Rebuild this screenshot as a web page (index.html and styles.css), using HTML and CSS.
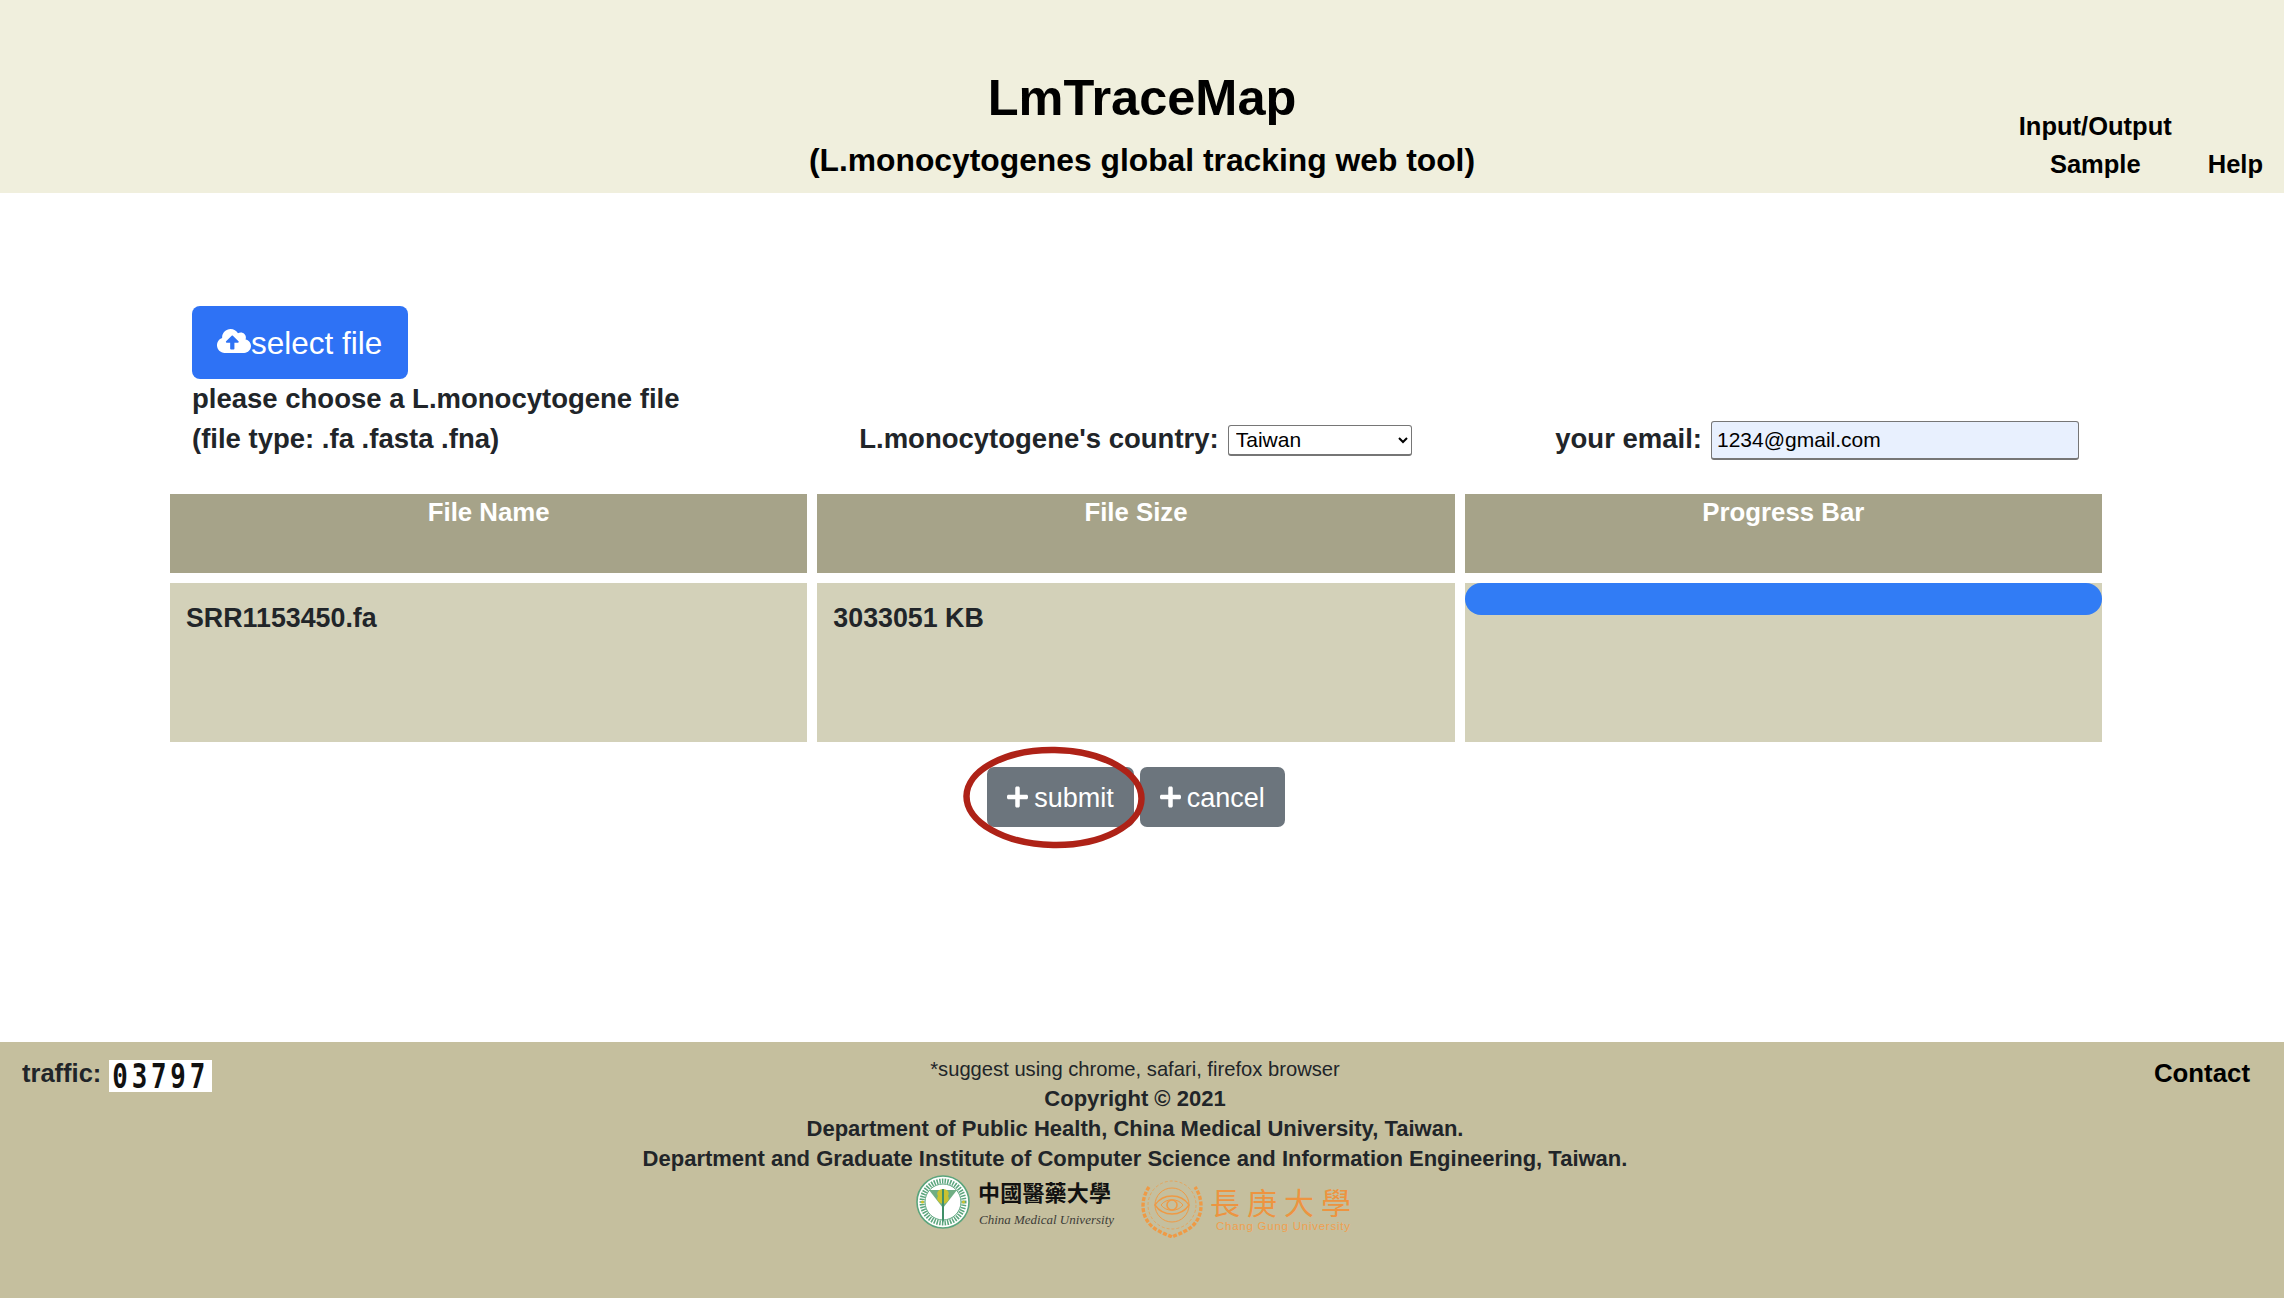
FILE: index.html
```html
<!DOCTYPE html>
<html lang="en">
<head>
<meta charset="utf-8">
<title>LmTraceMap</title>
<link rel="stylesheet" href="styles.css">
</head>
<body>
<div class="page">
  <header class="site-header">
    <div class="titles">
      <h1>LmTraceMap</h1>
      <h2>(L.monocytogenes global tracking web tool)</h2>
    </div>
    <nav class="site-nav">
      <a class="nav-link">Input/Output<br>Sample</a>
      <a class="nav-link">Help</a>
    </nav>
  </header>

  <main class="content">
    <form class="form-row">
      <div class="form-col file-col">
        <button type="button" class="btn btn-blue">
          <svg class="ico-cloud" viewBox="0 0 640 512"><path fill="currentColor" d="M537.6 226.6c4.1-10.7 6.4-22.4 6.4-34.6 0-53-43-96-96-96-19.7 0-38.1 6-53.3 16.2C367 64.2 315.3 32 256 32c-88.4 0-160 71.6-160 160 0 2.7.1 5.4.2 8.1C40.2 219.8 0 273.2 0 336c0 79.5 64.5 144 144 144h368c70.7 0 128-57.3 128-128 0-61.9-44-113.6-102.4-125.4zM393.4 288H328v112c0 8.8-7.2 16-16 16h-48c-8.8 0-16-7.2-16-16V288h-65.4c-14.3 0-21.4-17.2-11.3-27.3l105.4-105.4c6.2-6.2 16.4-6.2 22.6 0l105.4 105.4c10.1 10.1 2.9 27.3-11.3 27.3z"/></svg><span class="btn-label">select file</span>
        </button>
        <p class="hint">please choose a L.monocytogene file<br>(file type: .fa .fasta .fna)</p>
      </div>
      <div class="form-col country-col">
        <label class="field-label" for="country">L.monocytogene's country:</label>
        <select id="country" class="country-select"><option>Taiwan</option></select>
      </div>
      <div class="form-col email-col">
        <label class="field-label" for="email">your email:</label>
        <input id="email" class="email-input" type="text" value="1234@gmail.com">
      </div>
    </form>

    <div class="file-table">
      <div class="cell head">File Name</div>
      <div class="cell head">File Size</div>
      <div class="cell head">Progress Bar</div>
      <div class="cell body-cell">SRR1153450.fa</div>
      <div class="cell body-cell">3033051 KB</div>
      <div class="cell progress-cell"><div class="progress-bar"></div></div>
    </div>

    <div class="actions">
      <span class="submit-wrap">
        <button type="button" class="btn btn-gray">
          <svg class="ico-plus" viewBox="0 0 448 512"><path fill="currentColor" d="M416 208H272V64c0-17.67-14.33-32-32-32h-32c-17.67 0-32 14.33-32 32v144H32c-17.67 0-32 14.33-32 32v32c0 17.67 14.33 32 32 32h144v144c0 17.67 14.33 32 32 32h32c17.67 0 32-14.33 32-32V304h144c17.67 0 32-14.33 32-32v-32c0-17.67-14.33-32-32-32z"/></svg><span class="btn-label">submit</span>
        </button>
        <svg class="ring" viewBox="0 0 184 103"><ellipse cx="92" cy="51.5" rx="87.5" ry="47.5" fill="none" stroke="#ae2217" stroke-width="6.5" transform="rotate(1 92 51.5)"/></svg>
      </span>
      <button type="button" class="btn btn-gray">
        <svg class="ico-plus" viewBox="0 0 448 512"><path fill="currentColor" d="M416 208H272V64c0-17.67-14.33-32-32-32h-32c-17.67 0-32 14.33-32 32v144H32c-17.67 0-32 14.33-32 32v32c0 17.67 14.33 32 32 32h144v144c0 17.67 14.33 32 32 32h32c17.67 0 32-14.33 32-32V304h144c17.67 0 32-14.33 32-32v-32c0-17.67-14.33-32-32-32z"/></svg><span class="btn-label">cancel</span>
      </button>
    </div>
  </main>

  <footer class="site-footer">
    <div class="traffic">traffic:<span class="counter"><span class="counter-digits">03797</span></span></div>
    <div class="credits">
      <p class="suggest">*suggest using chrome, safari, firefox browser</p>
      <p>Copyright © 2021</p>
      <p>Department of Public Health, China Medical University, Taiwan.</p>
      <p>Department and Graduate Institute of Computer Science and Information Engineering, Taiwan.</p>
      <div class="logos">
        <div class="logo logo-cmu">
          <svg class="crest-cmu" viewBox="0 0 54 54">
            <circle cx="27" cy="27" r="26" fill="#fff" stroke="#5aa57c" stroke-width="1.6"/>
            <circle cx="27" cy="27" r="21" fill="none" stroke="#5aa57c" stroke-width="5" stroke-dasharray="1.5 1.2"/>
            <circle cx="27" cy="27" r="18" fill="#fff" stroke="#5aa57c" stroke-width="1"/>
            <path d="M13 15 H41 L27 33 Z" fill="#6fae83"/>
            <path d="M27 14 C22 14 20 18 22 21 C20 24 22 28 27 29 C32 28 34 24 32 21 C34 18 32 14 27 14 Z" fill="#c9c232"/>
            <path d="M26 14 H28 V45 L27 48 L26 45 Z" fill="#3f8f68"/>
            <circle cx="6.5" cy="27" r="1.6" fill="#c9c232"/>
            <circle cx="47.5" cy="27" r="1.6" fill="#c9c232"/>
          </svg>
          <div class="logo-text">
            <span class="cmu-zh">中國醫藥大學</span>
            <span class="cmu-en">China Medical University</span>
          </div>
        </div>
        <div class="logo logo-cgu">
          <svg class="crest-cgu" viewBox="0 0 64 60">
            <g fill="none" stroke="#ef9a45">
              <path d="M9 9 C0 22 0 42 17 52 C24 56 28 57 32 59 C36 57 40 56 47 52 C64 42 64 22 55 9" stroke-width="3.4" stroke-dasharray="4 1.6"/>
              <circle cx="32" cy="27" r="24" stroke-width="1" stroke-dasharray="3 2" opacity=".7"/>
              <circle cx="32" cy="27" r="17" stroke-width="1"/>
              <path d="M15 27 C23 15 41 15 49 27 C41 39 23 39 15 27 Z" stroke-width="1.4"/>
              <path d="M21 27 C26 20 38 20 43 27 C38 34 26 34 21 27 Z" stroke-width="1"/>
              <circle cx="32" cy="27" r="5" stroke-width="1.6"/>
            </g>
          </svg>
          <div class="logo-text">
            <span class="cgu-zh">長庚大學</span>
            <span class="cgu-en">Chang Gung University</span>
          </div>
        </div>
      </div>
    </div>
    <a class="contact">Contact</a>
  </footer>
</div>
</body>
</html>
```
FILE: styles.css
```css
* { box-sizing: border-box; }
html, body { margin: 0; padding: 0; }
body {
  font-family: "Liberation Sans", Arial, sans-serif;
  color: #212529;
  background: #fff;
}
p, h1, h2 { margin: 0; }
.page {
  height: 100vh;
  display: flex;
  flex-direction: column;
}

/* header */
.site-header {
  height: 193px;
  flex: none;
  background: #f0efdd;
  display: grid;
  grid-template-columns: 1fr auto 1fr;
  color: #000;
}
.titles {
  grid-column: 2;
  text-align: center;
  padding-top: 66px;
}
.titles h1 {
  font-size: 50.5px;
  line-height: 64px;
  font-weight: 700;
}
.titles h2 {
  font-size: 31.8px;
  line-height: 60px;
  font-weight: 700;
}
.site-nav {
  grid-column: 3;
  justify-self: end;
  align-self: end;
  display: flex;
  align-items: flex-end;
  gap: 36px;
  padding: 0 21px 10px 0;
}
.nav-link {
  font-size: 25.5px;
  line-height: 38px;
  font-weight: 700;
  text-align: center;
}

/* form */
.content {
  flex: 1;
  padding: 113px 182px 0 170px;
}
.form-row {
  display: grid;
  grid-template-columns: repeat(3, 1fr);
  align-items: end;
  height: 188px;
  padding-bottom: 48px;
  margin-right: -2px;
}
.file-col { padding-left: 22px; }
.hint {
  font-size: 27.5px;
  line-height: 40px;
  font-weight: 700;
}
.country-col, .email-col {
  display: flex;
  align-items: center;
  height: 40px;
}
.country-col { justify-content: center; padding-right: 3px; }
.email-col { justify-content: flex-end; padding-right: 25px; }
.field-label {
  font-size: 27.5px;
  font-weight: 700;
  line-height: 40px;
}
.country-select {
  width: 184px;
  height: 31px;
  margin: 2px 0 0 9px;
  font: 21px "Liberation Sans", Arial, sans-serif;
  background: #fff;
  color: #000;
  border: 1px solid #767676;
  border-bottom-width: 2px;
  border-radius: 3px;
  padding-left: 3px;
}
.email-input {
  width: 368px;
  height: 39px;
  margin: 2px 0 0 9px;
  font: 21px "Liberation Sans", Arial, sans-serif;
  color: #000;
  background: #e8f0fe;
  border: 1px solid #767676;
  border-bottom-width: 2px;
  border-radius: 3px;
  padding: 0 5px;
}

/* table */
.file-table {
  display: grid;
  grid-template-columns: repeat(3, 1fr);
  grid-template-rows: 79px 159px;
  gap: 10px;
}
.cell { min-width: 0; }
.head {
  background: #a6a389;
  color: #fff;
  font-size: 25.8px;
  line-height: 36px;
  font-weight: 700;
  text-align: center;
}
.body-cell {
  background: #d3d1b9;
  font-size: 26.8px;
  font-weight: 700;
  line-height: 40px;
  padding: 15px 16px;
}
.progress-cell { background: #d3d1b9; }
.progress-bar {
  height: 32px;
  background: #317cf5;
  border-radius: 16px;
}

/* buttons */
.actions {
  display: flex;
  justify-content: center;
  gap: 6px;
  margin-top: 25px;
}
.submit-wrap { position: relative; display: block; }
.btn {
  border: 0;
  border-radius: 7px;
  color: #fff;
  font-family: "Liberation Sans", Arial, sans-serif;
  display: flex;
  align-items: center;
}
.btn-label { padding-top: 2px; }
.btn-blue {
  width: 216px;
  height: 73px;
  background: #2e72f5;
  font-size: 31.5px;
  padding: 0 0 0 25px;
  border-radius: 8px;
}
.btn-gray {
  height: 60px;
  background: #6c757d;
  font-size: 27px;
  padding: 0 20px;
}
.ico-cloud { width: 34px; height: 28px; margin-top: -4px; }
.ico-plus { width: 21px; height: 24px; margin-right: 6px; }
.ring {
  position: absolute;
  left: -25px;
  top: -21px;
  width: 184px;
  height: 103px;
  pointer-events: none;
}

/* footer */
.site-footer {
  height: 256px;
  flex: none;
  background: #c5bf9e;
  display: grid;
  grid-template-columns: 220px 1fr 234px;
  padding-top: 12px;
}
.traffic {
  font-size: 25.5px;
  font-weight: 700;
  line-height: 38px;
  padding-left: 22px;
  display: flex;
  align-items: flex-start;
  white-space: nowrap;
}
.counter {
  display: flex;
  justify-content: center;
  width: 103px;
  height: 32px;
  margin: 6px 0 0 8px;
  background: #fff;
  color: #111;
}
.counter-digits {
  display: block;
  font: 700 34px/32px "DejaVu Sans Mono", monospace;
  letter-spacing: 5px;
  transform: scaleX(.76);
}
.credits {
  text-align: center;
  font-size: 22px;
  line-height: 30px;
  font-weight: 700;
}
.suggest { font-size: 20.2px; font-weight: 400; }
.contact {
  font-size: 25.8px;
  font-weight: 700;
  line-height: 38px;
  color: #000;
  text-align: right;
  padding-right: 34px;
}
.logos {
  display: flex;
  justify-content: center;
  gap: 26px;
  font-weight: 400;
  text-align: left;
  padding-left: 4px;
}
.logo { display: flex; }
.crest-cmu { width: 54px; height: 54px; margin-top: 1px; }
.crest-cgu { width: 64px; height: 60px; margin-top: 4px; }
.logo-text { display: flex; flex-direction: column; }
.logo-cmu .logo-text { margin-left: 8px; }
.logo-cgu .logo-text { margin-left: 6px; }
.cmu-zh {
  font: 700 22px/28px "Noto Sans CJK TC", sans-serif;
  color: #111;
  letter-spacing: 0.2px;
  margin-top: 3px;
}
.cmu-en {
  font: italic 13px/18px "Liberation Serif", serif;
  color: #3d3d38;
  margin: 6px 0 0 1px;
}
.cgu-zh {
  font: 400 30px/32px "Noto Sans CJK TC", sans-serif;
  color: #ed9440;
  letter-spacing: 7px;
  margin-top: 11px;
}
.cgu-en {
  font: 11.5px/12px "Liberation Sans", Arial, sans-serif;
  color: #f0a050;
  letter-spacing: .75px;
  margin: 3px 0 0 6px;
}
```
